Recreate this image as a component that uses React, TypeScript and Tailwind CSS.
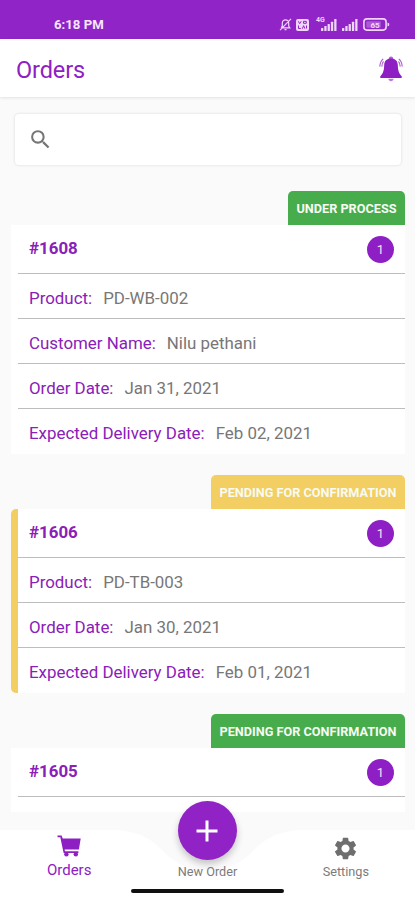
import { MdAdd, MdSearch, MdSettings } from 'react-icons/md';

interface Order {
  id: string;
  status: string;
  tabClass: string;
  count: number;
  highlighted?: boolean;
  fields: { label: string; value: string }[];
}

const ORDERS: Order[] = [
  {
    id: '#1608',
    status: 'UNDER PROCESS',
    tabClass: 'w-[117px] bg-[#46ac4c]',
    count: 1,
    fields: [
      { label: 'Product:', value: 'PD-WB-002' },
      { label: 'Customer Name:', value: 'Nilu pethani' },
      { label: 'Order Date:', value: 'Jan 31, 2021' },
      { label: 'Expected Delivery Date:', value: 'Feb 02, 2021' },
    ],
  },
  {
    id: '#1606',
    status: 'PENDING FOR CONFIRMATION',
    tabClass: 'w-[194px] bg-[#f3ce62]',
    count: 1,
    highlighted: true,
    fields: [
      { label: 'Product:', value: 'PD-TB-003' },
      { label: 'Order Date:', value: 'Jan 30, 2021' },
      { label: 'Expected Delivery Date:', value: 'Feb 01, 2021' },
    ],
  },
  {
    id: '#1605',
    status: 'PENDING FOR CONFIRMATION',
    tabClass: 'w-[194px] bg-[#46ac4c]',
    count: 1,
    fields: [],
  },
];

function SignalIcon() {
  return (
    <svg width="16" height="12" viewBox="0 0 16 12" fill="currentColor">
      <rect x="0" y="9" width="2.3" height="3" rx=".5" />
      <rect x="3.3" y="7" width="2.3" height="5" rx=".5" />
      <rect x="6.6" y="5" width="2.3" height="7" rx=".5" />
      <rect x="9.9" y="2.7" width="2.3" height="9.3" rx=".5" />
      <rect x="13.2" y="0" width="2.3" height="12" rx=".5" />
    </svg>
  );
}

function StatusBar() {
  return (
    <div className="flex h-[39px] shrink-0 items-start justify-between bg-[#9024c6] pt-[17px] pr-[25px] pl-[54px] text-[#f0d5fa]">
      <span className="text-[13.2px] leading-4 font-bold text-[#f6e6fc]">6:18 PM</span>
      <div className="flex items-center pt-[1px]">
        {/* Muted bell */}
        <svg width="13" height="13" viewBox="0 0 13 13" fill="none" stroke="currentColor" strokeWidth="1.2">
          <path d="M2.2 9.8h8.6L9.7 8V5.2C9.7 3 8.3 1.8 6.5 1.8S3.3 3 3.3 5.2V8L2.2 9.8M5.5 11.6h2M12 .8L1 12.2" />
        </svg>
        {/* VoLTE badge */}
        <svg className="ml-1" width="13" height="12" viewBox="0 0 13 12">
          <rect width="13" height="12" rx="2" fill="currentColor" />
          <path
            d="M2.3 2.3l1.4 2.4 1.4-2.4M7.5 2.3h2.8v2H7.5zM2.5 6.5v3h2.3M6.3 9.7l1.3-3 1.3 3M10.5 6.5v3"
            fill="none"
            stroke="#9024c6"
            strokeWidth="1"
          />
        </svg>
        <div className="relative ml-[12px]">
          <SignalIcon />
          <span className="absolute -top-[2px] -left-[5px] text-[7px] leading-[7px] font-bold">4G</span>
        </div>
        <div className="ml-[5px]">
          <SignalIcon />
        </div>
        <svg className="ml-[5px]" width="27" height="13" viewBox="0 0 27 13">
          <rect x=".9" y=".9" width="22.2" height="11.2" rx="3" fill="none" stroke="currentColor" strokeWidth="1.6" />
          <path d="M24.5 4.5l1.7 1v2l-1.7 1z" fill="currentColor" />
          <rect x="3.3" y="3.3" width="14.5" height="6.4" rx="1" fill="currentColor" opacity=".3" />
          <text x="12" y="9.5" textAnchor="middle" fontSize="8" fontWeight="700" fill="currentColor">
            65
          </text>
        </svg>
      </div>
    </div>
  );
}

function BellIcon() {
  return (
    <svg width="24" height="26" viewBox="0 0 24 26" fill="#8e20c3">
      <circle cx="12" cy="2.6" r="2.2" opacity=".7" />
      <path d="M12 2.5c-4.2 0-6.6 2.4-6.8 6.3-.2 5-.6 8-3.9 11.5v1.8h21.4v-1.8c-3.3-3.5-3.7-6.5-3.9-11.5-.2-3.9-2.6-6.3-6.8-6.3z" />
      <path d="M9.3 22.8h5.4c-.3 1.6-1.3 2.5-2.7 2.5s-2.4-.9-2.7-2.5z" opacity=".6" />
      <path
        d="M4.2 2.9C2.2 4.6 1 7 .8 10.6M4.5 5.4C3.3 6.9 2.9 8.6 2.8 10.6M19.8 2.9c2 1.7 3.2 4.1 3.4 7.7M19.5 5.4c1.2 1.5 1.6 3.2 1.7 5.2"
        fill="none"
        stroke="#8e20c3"
        strokeWidth="1.1"
        opacity=".75"
      />
    </svg>
  );
}

function CartIcon() {
  return (
    <svg width="24" height="23" viewBox="0 0 24 23" fill="#8e20c3">
      <path d="M.5.6h4.1l1.1 3h18L21.9 14.6H7.6l.4 1.6h13.4v1.7H6.6L3.3 2.2H.5z" />
      <circle cx="9.4" cy="19.3" r="2.2" />
      <circle cx="18.8" cy="19.3" r="2.2" />
    </svg>
  );
}

function OrderCard({ order }: { order: Order }) {
  return (
    <article className="flex flex-col">
      <div
        className={`flex h-[34px] items-center justify-center self-end rounded-t-[5px] pt-[1px] text-[12.7px] font-bold whitespace-nowrap text-[#f7fbf2] ${order.tabClass}`}
      >
        {order.status}
      </div>
      <div
        className={`border-l-[7px] bg-white text-[16.9px] ${
          order.highlighted ? 'rounded-l-[5px] border-[#f3ce62]' : 'border-white'
        }`}
      >
        <div className="flex h-[49px] items-center justify-between border-b-[1.5px] border-[#bdbdbd] pr-[11px] pl-[11px]">
          <span className="font-bold text-[#8a20b8]">{order.id}</span>
          <span className="flex size-[27px] items-center justify-center rounded-full bg-[#8e1fc4] pt-px text-[13px] text-[#f5e3fc]">
            {order.count}
          </span>
        </div>
        {order.fields.map((field) => (
          <div
            key={field.label}
            className="flex h-[45px] items-center gap-[11px] border-b-[1.5px] border-[#bdbdbd] pt-[5px] pl-[11px] last:border-b-0 last:pt-[4px]"
          >
            <span className="text-[#8a20b8]">{field.label}</span>
            <span className="text-[#777777]">{field.value}</span>
          </div>
        ))}
        {order.fields.length === 0 && <div className="h-[15px]" />}
      </div>
    </article>
  );
}

function BottomNav() {
  return (
    <nav className="relative h-[70px] shrink-0">
      <svg className="absolute inset-0" width="415" height="70" viewBox="0 0 415 70">
        <path
          d="M0 0h112c24 0 38 8 50 20 14 15 28 20 46 20s32-5 46-20C266 8 280 0 304 0h111v70H0z"
          fill="#ffffff"
        />
      </svg>
      <div className="relative grid h-full grid-cols-3 text-[12.7px] text-[#7b7b7b]">
        <div className="flex flex-col items-center text-[15px] text-[#8e20c3]">
          <div className="mt-[5px]">
            <CartIcon />
          </div>
          <span className="mt-[2px] leading-5">Orders</span>
        </div>
        <div className="flex flex-col items-center">
          <button className="-mt-[29px] flex size-[59px] shrink-0 items-center justify-center rounded-full bg-[#9022c6] text-white shadow-[0_4px_7px_rgba(0,0,0,0.22)]">
            <MdAdd size={36} />
          </button>
          <span className="mt-[4px] leading-4">New Order</span>
        </div>
        <div className="flex flex-col items-center">
          <MdSettings className="mt-[5px] text-[#6e6e6e]" size={27} />
          <span className="mt-[2px] leading-4">Settings</span>
        </div>
      </div>
      <div className="absolute bottom-[7px] left-[131px] h-[4px] w-[153px] rounded-full bg-[#101010]" />
    </nav>
  );
}

export default function App() {
  return (
    <div className="flex h-[900px] w-[415px] flex-col overflow-hidden bg-[#fafafa] font-['Roboto',sans-serif]">
      <StatusBar />
      <header className="flex h-[58px] shrink-0 items-center justify-between bg-white pr-[12px] pl-[16px] shadow-[0_1px_3px_rgba(0,0,0,0.1)]">
        <h1 className="pt-[6px] text-[23.5px] tracking-[-0.1px] text-[#8e20c3]">Orders</h1>
        <div className="pt-[2px]">
          <BellIcon />
        </div>
      </header>
      <main className="min-h-0 flex-1 overflow-hidden">
        <div className="mt-[17px] mr-[14px] ml-[15px] flex h-[51px] items-center rounded-[4px] bg-white pl-[13px] shadow-[0_0_3px_rgba(0,0,0,0.14)]">
          <MdSearch size={25} className="text-[#757575]" />
        </div>
        <div className="mt-[26px] mr-[10px] ml-[11px] flex flex-col gap-[21px]">
          {ORDERS.map((order) => (
            <OrderCard key={order.id} order={order} />
          ))}
        </div>
      </main>
      <BottomNav />
    </div>
  );
}
